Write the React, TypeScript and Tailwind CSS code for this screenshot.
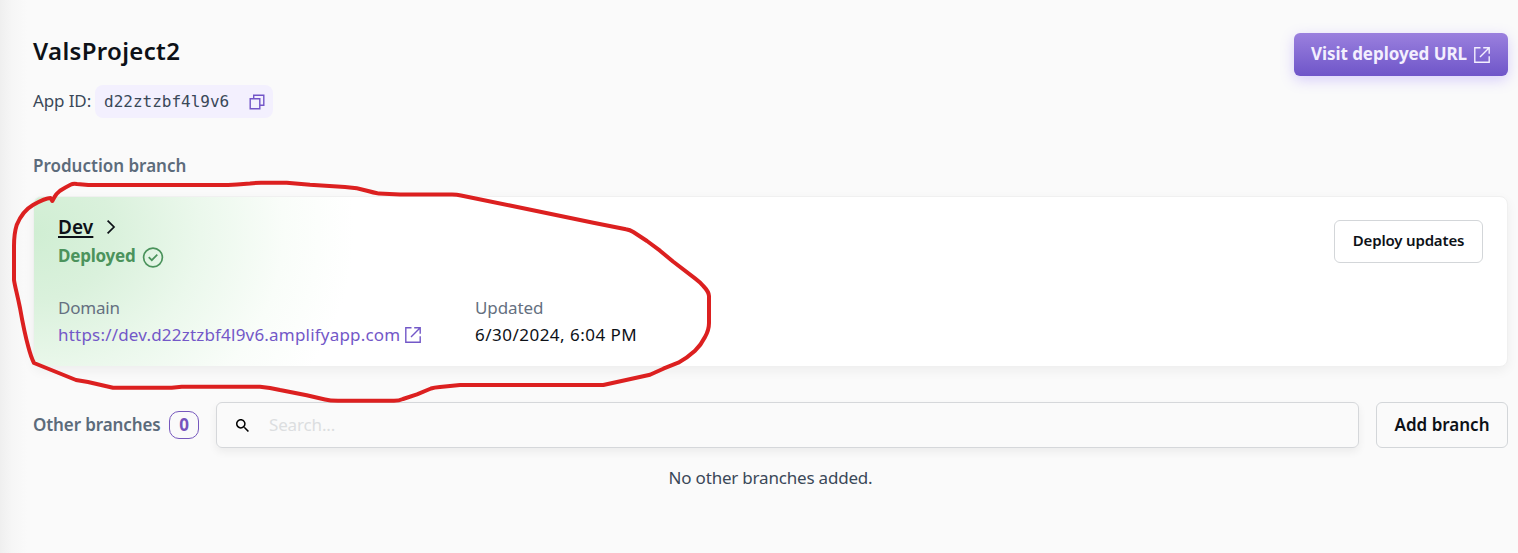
type IconProps = { className?: string };

function ExternalIcon({ className = '' }: IconProps) {
  return (
    <svg viewBox="0 0 16 16" className={`h-4 w-4 shrink-0 ${className}`} fill="none" stroke="currentColor" strokeWidth="1.4">
      <path d="M6.5 0.8H0.8V15.2H15.2V9.3" />
      <path d="M9.2 0.8H15.2V6.8M15.2 0.8L6 10" />
    </svg>
  );
}

function CopyIcon({ className = '' }: IconProps) {
  return (
    <svg viewBox="0 0 16 16" className={`h-4 w-4 shrink-0 ${className}`} fill="none" stroke="currentColor" strokeWidth="1.4">
      <path d="M1.2 4.7H10.8V14.8H1.2Z" />
      <path d="M4.7 4.5V1.2H14.8V11.3H11" />
    </svg>
  );
}

function CheckCircleIcon({ className = '' }: IconProps) {
  return (
    <svg viewBox="0 0 22 22" className={`h-[22px] w-[22px] shrink-0 ${className}`} fill="none" stroke="currentColor" strokeWidth="1.7">
      <circle cx="11" cy="11" r="9.4" />
      <path d="M6.7 10.7L9.8 13.7L15.3 8.2" />
    </svg>
  );
}

function ChevronIcon() {
  return (
    <svg viewBox="0 0 10 16" className="h-4 w-2.5 shrink-0" fill="none" stroke="#0d1117" strokeWidth="1.7">
      <path d="M1.6 1.6L8 8L1.6 14.4" />
    </svg>
  );
}

function SearchIcon() {
  return (
    <svg viewBox="3 3 17.5 17.5" className="h-[13px] w-[13px] shrink-0" fill="#000">
      <path d="M15.5 14h-.79l-.28-.27C15.41 12.59 16 11.11 16 9.5 16 5.91 13.09 3 9.5 3S3 5.91 3 9.5 5.91 16 9.5 16c1.61 0 3.09-.59 4.23-1.57l.27.28v.79l5 4.99L20.49 19l-4.99-5zm-6 0C7.01 14 5 11.99 5 9.5S7.01 5 9.5 5 14 7.01 14 9.5 11.99 14 9.5 14z" />
    </svg>
  );
}

function Annotation() {
  return (
    <svg
      className="pointer-events-none absolute left-0 top-0"
      width="1518"
      height="553"
      fill="none"
      stroke="#dc2020"
      strokeWidth="4"
      strokeLinejoin="round"
      strokeLinecap="round"
    >
      <path d="M52.3 201L50.5 198C47 198 40 201 33 205C26 209 20 217 16.7 225C14.5 232 14 238 14 246V280C15 287 17 293 20 308C23 325 25 335 28.3 346.7Q31 357 34 363L76 380L88 382L113 387.7H171.7L181.7 386.7H260Q270 387.5 280 390L306.7 395.3L325 399.5Q330 400.8 338 400.8H394Q399 400.8 403 399L417 394.3L431 388.5Q434 387.5 440 387L460 385H603.3L650 374.7L663.3 368.7L678.3 362.7Q687 358 695 350.7Q701 345 705 337Q709 330 709 323V296Q709 292 703.3 286Q700 282 695 278.3L673 261.5L660 250.7L647 241L633.3 232Q630 230 626 229.3L593.3 222.7L510 205.5L461 195.5Q457 194.6 452 194.6H400L379 193.6Q373 192.5 368 191C361 188.8 355 187.5 345 187L310 184.8L286.7 182.8H261Q255 182.8 250 183.4L237 184.6Q233 185 228 185H88.3L77 184Q73 183.4 71 184.5Q66 187 60 190.8Q56 194 54.5 197Z" />
    </svg>
  );
}

export default function App() {
  return (
    <div className="relative h-[553px] w-full overflow-hidden bg-[#fafafa] bg-[linear-gradient(to_right,#efefef_0px,#f6f6f6_12px,#fafafa_27px)] pl-[33px] pr-2.5 pt-[33px] font-['Noto_Sans',sans-serif] text-[17px] leading-6 text-[#3a4858]">
      <header className="flex h-[121px] items-start justify-between">
        <div>
          <h1 className="mt-0.5 text-2xl font-semibold tracking-[0.34px] text-[#0d1117]">ValsProject2</h1>
          <div className="mt-[18px] flex h-[33px] items-center">
            <span className="w-[62px] -translate-y-px whitespace-nowrap tracking-[-0.12px]">App ID:</span>
            <div className="flex h-[33px] w-[178px] items-center justify-between rounded-lg bg-[#f3f0fe] pl-[9px] pr-2">
              <code className="font-['DejaVu_Sans_Mono',monospace] text-base">d22ztzbf4l9v6</code>
              <CopyIcon className="text-[#7254c8]" />
            </div>
          </div>
        </div>
        <a className="flex h-[43px] w-[214px] items-center gap-[7px] whitespace-nowrap rounded-md bg-linear-to-b from-[#9b80de] to-[#6f55c9] pl-[17px] font-bold tracking-[-0.06px] text-[#f3effe] shadow-[0_4px_14px_rgba(125,95,255,0.28)]">
          <span className="w-[156px] -translate-y-px">Visit deployed URL</span>
          <ExternalIcon />
        </a>
      </header>

      <h2 className="h-[42px] font-semibold text-[#5c6b7b]">Production branch</h2>

      <section className="flex h-[171px] items-start justify-between rounded-lg border border-[#f0f0f0] bg-white bg-[radial-gradient(ellipse_320px_270px_at_0px_35px,#d0eed3_0%,#daf1dc_25%,#ebf8ec_52%,#f9fdf9_78%,#ffffff_100%)] pl-6 pr-6 pt-[23px] shadow-[0_4px_12px_rgba(0,0,0,0.05)]">
        <div>
          <div className="-mt-[5px] flex h-6 items-center gap-[13px]">
            <a className="text-[19px] font-semibold tracking-[0.1px] text-[#0d1117] underline decoration-2 underline-offset-2">Dev</a>
            <ChevronIcon />
          </div>
          <div className="mt-[5px] flex h-6 items-center gap-[7px] font-bold tracking-[-0.23px] text-[#4b935c]">
            <span>Deployed</span>
            <CheckCircleIcon className="translate-y-[1.5px]" />
          </div>
          <dl className="mt-7 flex">
            <div className="w-[417px]">
              <dt className="tracking-[-0.22px] text-[#657080]">Domain</dt>
              <dd className="mt-[3px] flex items-center gap-[5px] text-[#7358c8]">
                <a className="whitespace-nowrap tracking-[0.2px]">https://dev.d22ztzbf4l9v6.amplifyapp.com</a>
                <ExternalIcon />
              </dd>
            </div>
            <div>
              <dt className="tracking-[-0.08px] text-[#657080]">Updated</dt>
              <dd className="mt-[3px] whitespace-nowrap tracking-[0.48px] text-[#0d1117]">6/30/2024, 6:04 PM</dd>
            </div>
          </dl>
        </div>
        <button className="flex h-[43px] w-[149px] items-center justify-center whitespace-nowrap rounded-md border border-[#d3d6d9] pb-[3px] text-[15px] font-semibold tracking-[-0.17px] text-[#0d1117]">
          Deploy updates
        </button>
      </section>

      <div className="mt-[35px] flex h-[46px] items-center">
        <h2 className="w-[136px] whitespace-nowrap font-semibold tracking-[-0.1px] text-[#5c6b7b]">Other branches</h2>
        <span className="mr-[17px] flex h-7 w-[30px] items-center justify-center rounded-[10px] border border-[#7658bd] pb-px font-bold text-[#7654bd]">
          0
        </span>
        <label className="flex h-[46px] flex-1 items-center gap-5 rounded-md border border-[#d5d7da] pl-[19px] shadow-[0_4px_8px_rgba(0,0,0,0.06)]">
          <SearchIcon />
          <input
            className="min-w-0 flex-1 bg-transparent tracking-[-0.15px] outline-none placeholder:text-[#dcdee0]"
            placeholder="Search..."
          />
        </label>
        <button className="ml-[17px] h-[46px] w-[132px] whitespace-nowrap rounded-md border border-[#d3d6d9] font-semibold text-[#0d1117]">
          Add branch
        </button>
      </div>
      <p className="mt-[18px] text-center tracking-[-0.2px]">No other branches added.</p>

      <Annotation />
    </div>
  );
}
